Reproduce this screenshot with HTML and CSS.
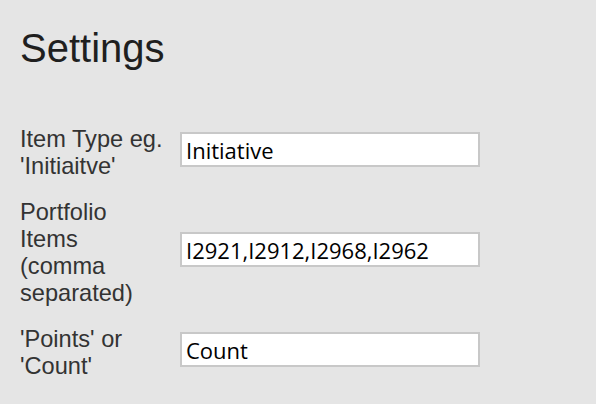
FILE: index.html
```html
<!DOCTYPE html>
<html lang="en">
<head>
<meta charset="utf-8">
<title>Settings</title>
<link rel="stylesheet" href="styles.css">
</head>
<body>
  <main class="settings">
    <h1 class="settings-title">Settings</h1>
    <form class="settings-form">
      <div class="field">
        <label class="field-label" for="itemType">Item Type eg. 'Initiaitve'</label>
        <input class="field-input" id="itemType" type="text" value="Initiative">
      </div>
      <div class="field">
        <label class="field-label" for="items">Portfolio Items (comma separated)</label>
        <input class="field-input" id="items" type="text" value="I2921,I2912,I2968,I2962">
      </div>
      <div class="field">
        <label class="field-label" for="mode">'Points' or 'Count'</label>
        <input class="field-input" id="mode" type="text" value="Count">
      </div>
    </form>
  </main>
</body>
</html>
```
FILE: styles.css
```css
html, body {
  margin: 0;
  padding: 0;
}

body {
  background: #e5e5e5;
  font-family: "Liberation Sans", Arial, Helvetica, sans-serif;
  color: #333333;
}

.settings {
  padding: 25px 20px;
}

.settings-title {
  margin: 0;
  font-size: 40px;
  line-height: 46px;
  font-weight: normal;
  color: #1f1f1f;
}

.settings-form {
  margin-top: 55px;
  display: flex;
  flex-direction: column;
  gap: 19px;
}

.field {
  display: flex;
  align-items: center;
  gap: 13px;
}

.field-label {
  width: 147px;
  flex: none;
  font-size: 23.6px;
  line-height: 27px;
  color: #333333;
}

.field-input {
  box-sizing: border-box;
  width: 300px;
  height: 35px;
  margin: 0 0 8px 0;
  padding: 2px 4px 0 4px;
  border: 2px solid #c8c8c8;
  background: #ffffff;
  font-family: "Open Sans", "Noto Sans", sans-serif;
  font-size: 22px;
  color: #000000;
  outline: none;
}
```
